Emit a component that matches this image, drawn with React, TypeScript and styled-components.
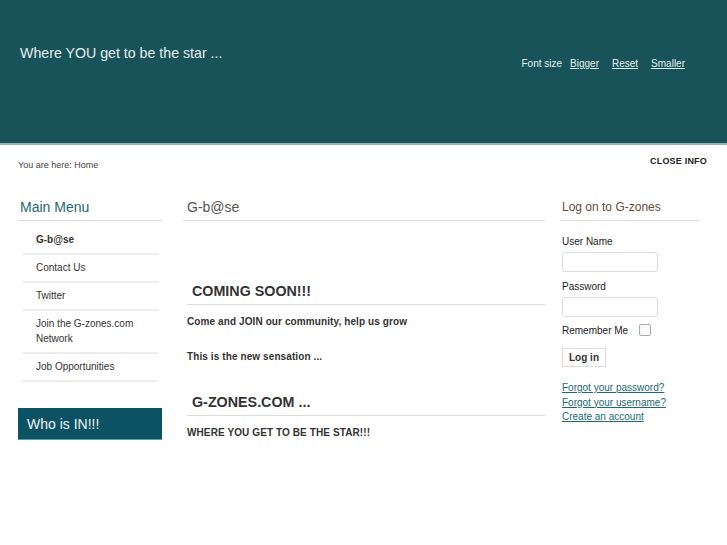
import React from "react";
import styled, { createGlobalStyle } from "styled-components";

const Global = createGlobalStyle`
  html, body { margin: 0; padding: 0; background: #fff; }
  body { font-family: "Liberation Sans", Arial, sans-serif; color: #333; }
`;

const Page = styled.div`
  width: 727px;
  min-height: 545px;
  background: #fff;
`;

const Header = styled.header`
  height: 143px;
  background: #18535a;
  border-bottom: 2px solid #93b6b9;
  display: flex;
  justify-content: space-between;
  align-items: flex-start;
  box-sizing: content-box;
`;

const Tagline = styled.h1`
  margin: 45px 0 0 20px;
  font-size: 14.2px;
  font-weight: normal;
  color: #e6eeee;
  line-height: 17px;
`;

const FontTools = styled.div`
  margin: 58px 42px 0 0;
  display: flex;
  gap: 13px;
  font-size: 10px;
  color: #e6eeee;
  line-height: 12px;
`;

const ToolLabel = styled.span`
  margin-right: -5px;
`;

const ToolLink = styled.a`
  color: #e6eeee;
  text-decoration: underline;
`;

const InfoBar = styled.div`
  display: flex;
  justify-content: space-between;
  padding: 13px 20px 0 18px;
  height: 40px;
  box-sizing: border-box;
`;

const Breadcrumb = styled.div`
  font-size: 9px;
  color: #444;
  margin-top: 1px;
  line-height: 12px;
`;

const CloseInfo = styled.div`
  font-size: 9px;
  font-weight: bold;
  color: #222;
  letter-spacing: 0.2px;
  line-height: 12px;
  margin-top: -3px;
`;

const Columns = styled.div`
  display: flex;
  padding: 14px 0 0 18px;
`;

const LeftCol = styled.div`
  width: 144px;
`;

const MiddleCol = styled.main`
  width: 362px;
  margin-left: 21px;
`;

const RightCol = styled.aside`
  width: 140px;
  margin-left: 15px;
`;

const ModuleTitle = styled.h3<{ $color: string; $size: number; $pad: number }>`
  margin: 0;
  font-size: ${(p) => p.$size}px;
  font-weight: normal;
  color: ${(p) => p.$color};
  padding: 0 0 4px ${(p) => p.$pad}px;
  line-height: 17px;
  border-bottom: 1px solid #dcdcdc;
`;

const Menu = styled.ul`
  list-style: none;
  margin: 6px 4px 0 5px;
  padding: 0;
`;

const MenuItem = styled.li<{ $active?: boolean }>`
  font-size: 10px;
  line-height: 15px;
  padding: 5px 0 6px 13px;
  border-bottom: 2px solid #ececec;
  color: #333;
  font-weight: ${(p) => (p.$active ? "bold" : "normal")};
`;

const WhoBox = styled.div`
  margin-top: 26px;
  background: #0b5364;
  color: #f0f4f5;
  font-size: 14px;
  height: 32px;
  line-height: 32px;
  padding-left: 9px;
  border-bottom: 1px solid #5f9aa4;
  box-sizing: border-box;
`;

const Article = styled.section`
  margin-top: 62px;
`;

const ArticleTitle = styled.h2<{ $top: number }>`
  margin: ${(p) => p.$top}px 0 0 4px;
  font-size: 14.3px;
  font-weight: bold;
  color: #333;
  padding: 0 0 4px 5px;
  line-height: 17px;
  border-bottom: 1px solid #dcdcdc;
`;

const Para = styled.p<{ $top: number }>`
  margin: ${(p) => p.$top}px 0 0 4px;
  font-size: 10px;
  letter-spacing: 0.1px;
  font-weight: bold;
  color: #333;
  line-height: 12px;
`;

const Form = styled.form`
  padding-left: 2px;
  margin-top: 15px;
`;

const Label = styled.label<{ $top: number }>`
  display: block;
  font-size: 10px;
  color: #222;
  line-height: 12px;
  margin-top: ${(p) => p.$top}px;
`;

const Input = styled.input`
  display: block;
  width: 96px;
  height: 20px;
  box-sizing: border-box;
  margin-top: 4px;
  border: 1px solid #ddd;
  border-radius: 3px;
  background: #fff;
`;

const RememberRow = styled.div`
  display: flex;
  align-items: center;
  margin-top: 7px;
  font-size: 10px;
  color: #222;
  gap: 11px;
`;

const Check = styled.span`
  width: 10px;
  height: 10px;
  border: 1px solid #aaa;
  border-radius: 2px;
  background: #fafafa;
`;

const Button = styled.button`
  margin-top: 12px;
  font-family: "Liberation Sans", Arial, sans-serif;
  font-size: 10px;
  font-weight: bold;
  color: #333;
  background: #fff;
  border: 1px solid #ddd;
  padding: 0 6px;
  height: 19px;
  line-height: 17px;
`;

const Links = styled.div`
  margin-top: 14px;
  display: flex;
  flex-direction: column;
`;

const FormLink = styled.a`
  font-size: 10px;
  line-height: 14.5px;
  color: #1d6a74;
  text-decoration: underline;
`;

export default function App() {
  return (
    <Page>
      <Global />
      <Header>
        <Tagline>Where YOU get to be the star ...</Tagline>
        <FontTools>
          <ToolLabel>Font size</ToolLabel>
          <ToolLink href="#">Bigger</ToolLink>
          <ToolLink href="#">Reset</ToolLink>
          <ToolLink href="#">Smaller</ToolLink>
        </FontTools>
      </Header>
      <InfoBar>
        <Breadcrumb>You are here: Home</Breadcrumb>
        <CloseInfo>CLOSE INFO</CloseInfo>
      </InfoBar>
      <Columns>
        <LeftCol>
          <ModuleTitle $color="#1d6a74" $size={14} $pad={2}>Main Menu</ModuleTitle>
          <Menu>
            <MenuItem $active>G-b@se</MenuItem>
            <MenuItem>Contact Us</MenuItem>
            <MenuItem>Twitter</MenuItem>
            <MenuItem>Join the G-zones.com Network</MenuItem>
            <MenuItem>Job Opportunities</MenuItem>
          </Menu>
          <WhoBox>Who is IN!!!</WhoBox>
        </LeftCol>
        <MiddleCol>
          <ModuleTitle $color="#555" $size={14} $pad={4}>G-b@se</ModuleTitle>
          <Article>
            <ArticleTitle $top={0}>COMING SOON!!!</ArticleTitle>
            <Para $top={11}>Come and JOIN our community, help us grow</Para>
            <Para $top={23}>This is the new sensation ...</Para>
            <ArticleTitle $top={31}>G-ZONES.COM ...</ArticleTitle>
            <Para $top={11}>WHERE YOU GET TO BE THE STAR!!!</Para>
          </Article>
        </MiddleCol>
        <RightCol>
          <ModuleTitle $color="#6b4a40" $size={12} $pad={2}>Log on to G-zones</ModuleTitle>
          <Form>
            <Label $top={0}>User Name</Label>
            <Input />
            <Label $top={9}>Password</Label>
            <Input type="password" />
            <RememberRow>
              <span>Remember Me</span>
              <Check />
            </RememberRow>
            <Button type="button">Log in</Button>
            <Links>
              <FormLink href="#">Forgot your password?</FormLink>
              <FormLink href="#">Forgot your username?</FormLink>
              <FormLink href="#">Create an account</FormLink>
            </Links>
          </Form>
        </RightCol>
      </Columns>
    </Page>
  );
}
